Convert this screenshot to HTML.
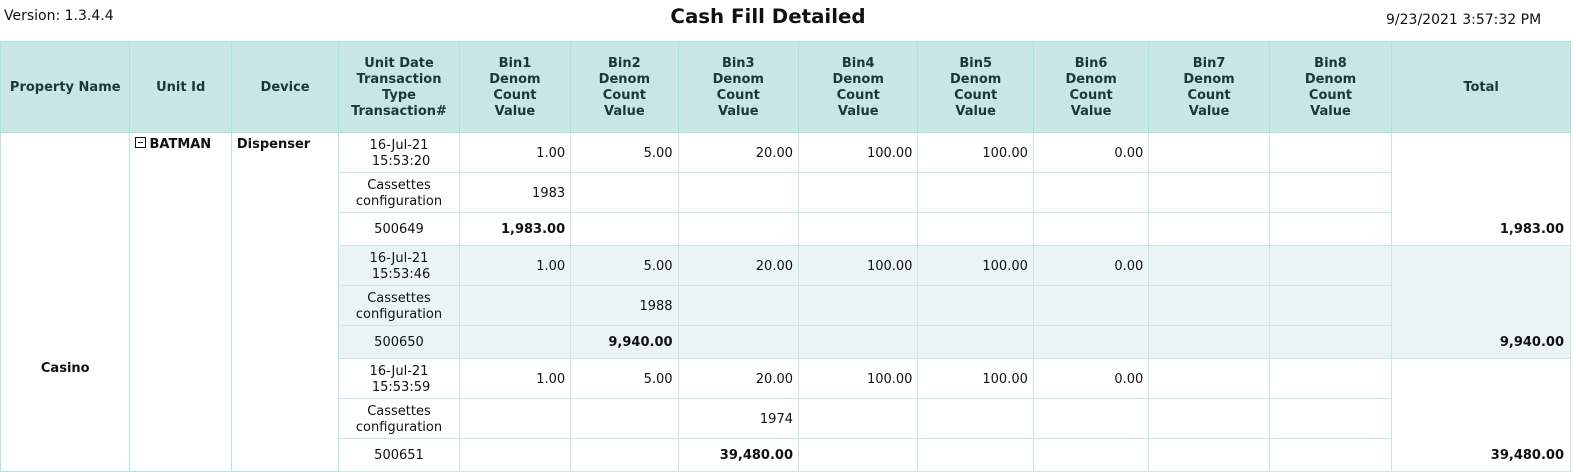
<!DOCTYPE html>
<html><head><meta charset="utf-8"><style>
body{margin:0;background:#fff;font-family:"DejaVu Sans",Verdana,sans-serif;font-size:13px;color:#111;width:1576px;height:472px;overflow:hidden;position:relative}
.ver{position:absolute;left:4px;top:8px;font-size:14px}
.title{position:absolute;left:0;width:1536px;top:5px;text-align:center;font-family:"DejaVu Sans",Verdana,sans-serif;font-weight:bold;font-size:19.8px}
.date{position:absolute;left:1386px;top:12px;font-size:14px}
table{position:absolute;left:0;top:41px;border-collapse:collapse;table-layout:fixed;width:1571px}
th{background:#c8e6e6;color:#1a3838;font-weight:bold;border:1px solid #a8e4e4;height:88px;line-height:16px;text-align:center;padding:2px 0 0}
td{border:1px solid #cce6e6;padding:2px 5px 0;text-align:right;line-height:16px}
td.c{text-align:center;padding:2px 0 0}
td.o{border:1px solid #b0e8e8;vertical-align:top;text-align:left;font-weight:bold;padding-top:4px}
td.p{border:1px solid #b0e8e8;text-align:center;font-weight:bold;vertical-align:top;padding-top:228px}
tr.a td{height:37px}
tr.b td{height:30px}
.g2 td{background:#eaf4f4}
td.tot{vertical-align:bottom;font-weight:bold;padding-bottom:7px;padding-right:6px;border-color:#cce6e6}
b{font-weight:bold}
.box{display:inline-block;width:9px;height:9px;border:1px solid #111;position:relative;vertical-align:0;margin-right:3px}
.box:after{content:"";position:absolute;left:2px;right:2px;top:4px;height:1px;background:#111}
</style></head><body>
<div class="ver">Version: 1.3.4.4</div>
<div class="title">Cash Fill Detailed</div>
<div class="date">9/23/2021 3:57:32 PM</div>
<table>
<colgroup><col style="width:129px"><col style="width:101px"><col style="width:107px"><col style="width:120px"><col style="width:111px"><col style="width:107px"><col style="width:120px"><col style="width:119px"><col style="width:115px"><col style="width:115px"><col style="width:120px"><col style="width:122px"><col style="width:178px"></colgroup>
<tr><th>Property Name</th><th>Unit Id</th><th>Device</th><th>Unit Date<br>Transaction<br>Type<br>Transaction#</th><th>Bin1<br>Denom<br>Count<br>Value</th><th>Bin2<br>Denom<br>Count<br>Value</th><th>Bin3<br>Denom<br>Count<br>Value</th><th>Bin4<br>Denom<br>Count<br>Value</th><th>Bin5<br>Denom<br>Count<br>Value</th><th>Bin6<br>Denom<br>Count<br>Value</th><th>Bin7<br>Denom<br>Count<br>Value</th><th>Bin8<br>Denom<br>Count<br>Value</th><th>Total</th></tr>
<tr class="a"><td class="p" rowspan="9">Casino</td><td class="o" rowspan="9"><span class="box"></span>BATMAN</td><td class="o" rowspan="9">Dispenser</td><td class="c">16-Jul-21<br>&nbsp;15:53:20</td><td>1.00</td><td>5.00</td><td>20.00</td><td>100.00</td><td>100.00</td><td>0.00</td><td></td><td></td><td class="tot" rowspan="3">1,983.00</td></tr>
<tr class="a"><td class="c">Cassettes<br>configuration</td><td>1983</td><td></td><td></td><td></td><td></td><td></td><td></td><td></td></tr>
<tr class="b"><td class="c">500649</td><td><b>1,983.00</b></td><td></td><td></td><td></td><td></td><td></td><td></td><td></td></tr>
<tr class="a g2"><td class="c">16-Jul-21<br>&nbsp;15:53:46</td><td>1.00</td><td>5.00</td><td>20.00</td><td>100.00</td><td>100.00</td><td>0.00</td><td></td><td></td><td class="tot" rowspan="3">9,940.00</td></tr>
<tr class="a g2"><td class="c">Cassettes<br>configuration</td><td></td><td>1988</td><td></td><td></td><td></td><td></td><td></td><td></td></tr>
<tr class="b g2"><td class="c">500650</td><td></td><td><b>9,940.00</b></td><td></td><td></td><td></td><td></td><td></td><td></td></tr>
<tr class="a"><td class="c">16-Jul-21<br>&nbsp;15:53:59</td><td>1.00</td><td>5.00</td><td>20.00</td><td>100.00</td><td>100.00</td><td>0.00</td><td></td><td></td><td class="tot" rowspan="3">39,480.00</td></tr>
<tr class="a"><td class="c">Cassettes<br>configuration</td><td></td><td></td><td>1974</td><td></td><td></td><td></td><td></td><td></td></tr>
<tr class="b"><td class="c">500651</td><td></td><td></td><td><b>39,480.00</b></td><td></td><td></td><td></td><td></td><td></td></tr>
</table>
</body></html>
